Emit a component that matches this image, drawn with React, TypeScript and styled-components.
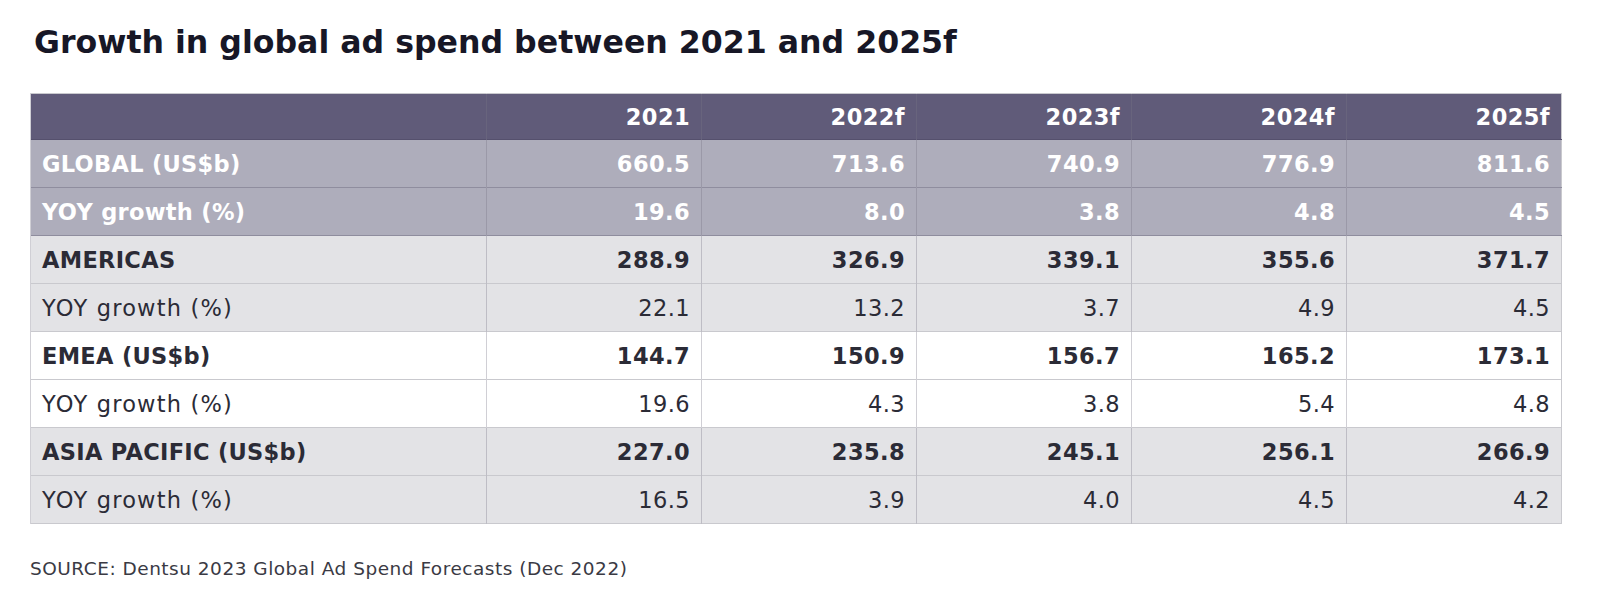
import React from 'react';
import styled, { createGlobalStyle } from 'styled-components';

const GlobalStyle = createGlobalStyle`
  html, body { margin: 0; padding: 0; background: #fff; }
  body { font-family: "DejaVu Sans", Verdana, sans-serif; }
`;

const Page = styled.div`
  padding: 20px 40px 0 30px;
`;

const Title = styled.h1`
  margin: 0 0 0 4px;
  font-size: 31.6px;
  line-height: 44px;
  font-weight: 700;
  color: #171726;
`;

const Table = styled.table`
  margin-top: 29px;
  width: 1532px;
  border-collapse: collapse;
  table-layout: fixed;
  border: 1px solid #c9c9ce;
`;

type Tone = 'head' | 'global' | 'grey' | 'white';

const bg: Record<Tone, string> = {
  head: '#605b79',
  global: '#aeadbb',
  grey: '#e3e3e6',
  white: '#ffffff',
};

const Row = styled.tr<{ $tone: Tone }>`
  background: ${p => bg[p.$tone]};
  height: ${p => (p.$tone === 'head' ? '46px' : '48px')};
  color: ${p => (p.$tone === 'head' || p.$tone === 'global' ? '#ffffff' : '#2b2b36')};
  border-bottom: 1px solid ${p => (p.$tone === 'head' ? '#55506d' : p.$tone === 'global' ? '#8f8d9e' : '#c9c9ce')};
`;

const Cell = styled.td<{ $strong?: boolean; $label?: boolean }>`
  padding: 0 11px 0 11px;
  font-size: 22.5px;
  font-weight: ${p => (p.$strong ? 700 : 400)};
  text-align: ${p => (p.$label ? 'left' : 'right')};
  letter-spacing: ${p => (p.$label ? (p.$strong ? '0.3px' : '1.2px') : '0.4px')};
  border-left: 1px solid rgba(120, 118, 135, 0.35);
  white-space: nowrap;
`;

const Source = styled.p`
  margin: 34px 0 0 0;
  font-size: 18.5px;
  letter-spacing: 0.5px;
  color: #3a3a44;
`;

const years = ['2021', '2022f', '2023f', '2024f', '2025f'];

const rows: { label: string; values: string[]; tone: Tone; strong: boolean }[] = [
  { label: 'GLOBAL (US$b)', values: ['660.5', '713.6', '740.9', '776.9', '811.6'], tone: 'global', strong: true },
  { label: 'YOY growth (%)', values: ['19.6', '8.0', '3.8', '4.8', '4.5'], tone: 'global', strong: true },
  { label: 'AMERICAS', values: ['288.9', '326.9', '339.1', '355.6', '371.7'], tone: 'grey', strong: true },
  { label: 'YOY growth (%)', values: ['22.1', '13.2', '3.7', '4.9', '4.5'], tone: 'grey', strong: false },
  { label: 'EMEA (US$b)', values: ['144.7', '150.9', '156.7', '165.2', '173.1'], tone: 'white', strong: true },
  { label: 'YOY growth (%)', values: ['19.6', '4.3', '3.8', '5.4', '4.8'], tone: 'white', strong: false },
  { label: 'ASIA PACIFIC (US$b)', values: ['227.0', '235.8', '245.1', '256.1', '266.9'], tone: 'grey', strong: true },
  { label: 'YOY growth (%)', values: ['16.5', '3.9', '4.0', '4.5', '4.2'], tone: 'grey', strong: false },
];

const App: React.FC = () => (
  <>
    <GlobalStyle />
    <Page>
      <Title>Growth in global ad spend between 2021 and 2025f</Title>
      <Table>
        <colgroup>
          <col style={{ width: 456 }} />
          {years.map(y => <col key={y} />)}
        </colgroup>
        <thead>
          <Row $tone="head">
            <Cell as="th" $label $strong />
            {years.map(y => (
              <Cell as="th" key={y} $strong>{y}</Cell>
            ))}
          </Row>
        </thead>
        <tbody>
          {rows.map((r, i) => (
            <Row key={i} $tone={r.tone}>
              <Cell $label $strong={r.strong}>{r.label}</Cell>
              {r.values.map((v, j) => (
                <Cell key={j} $strong={r.strong}>{v}</Cell>
              ))}
            </Row>
          ))}
        </tbody>
      </Table>
      <Source>SOURCE: Dentsu 2023 Global Ad Spend Forecasts (Dec 2022)</Source>
    </Page>
  </>
);

export default App;
